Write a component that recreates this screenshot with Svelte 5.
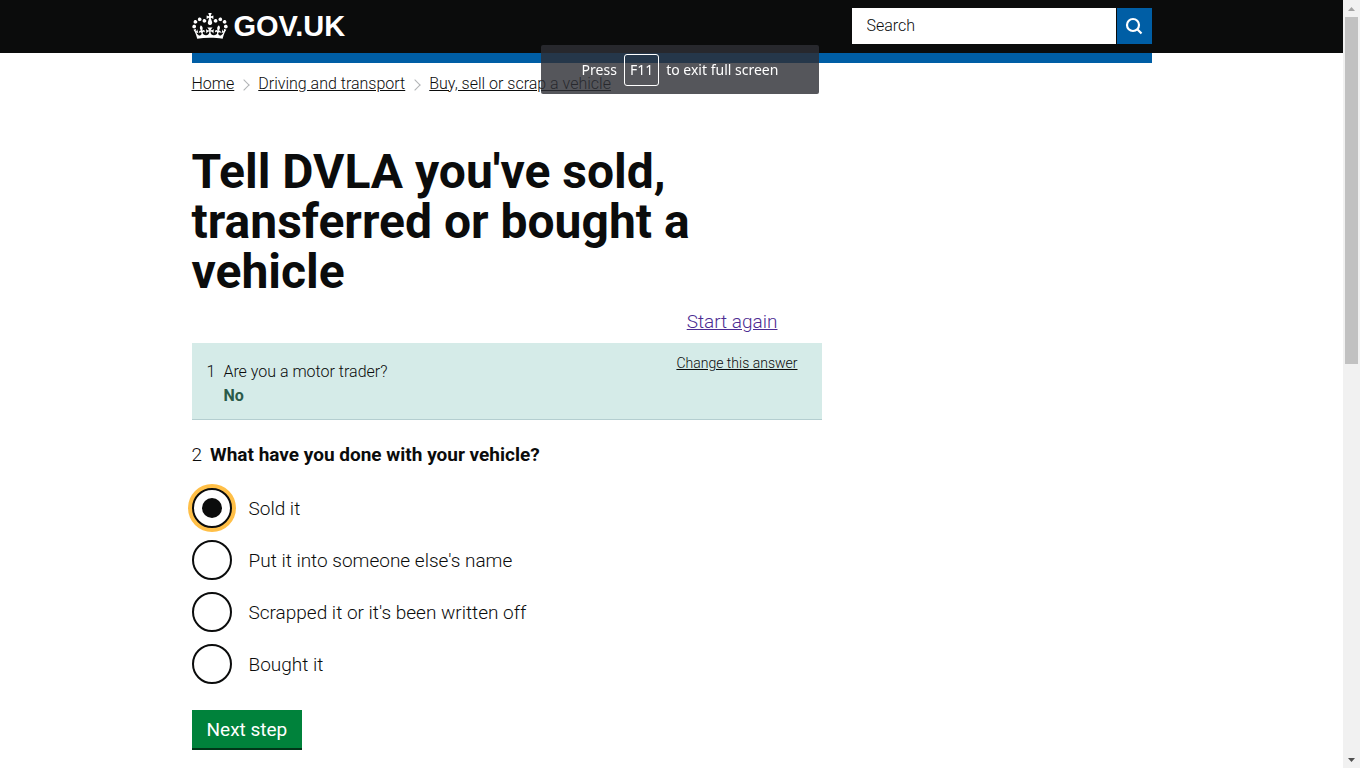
<script>
  const crumbs = ['Home', 'Driving and transport', 'Buy, sell or scrap a vehicle'];

  const options = [
    { value: 'sold',        label: 'Sold it' },
    { value: 'transferred', label: "Put it into someone else's name" },
    { value: 'scrapped',    label: "Scrapped it or it's been written off" },
    { value: 'bought',      label: 'Bought it' },
  ];

  let answer = $state('sold');
  let query = $state('');
</script>

<div class="screen">
  <div class="page">
    <header>
      <div class="container header-row">
        <a href="#home" class="logo">
          <svg viewBox="0 0 132 97" aria-hidden="true">
            <path fill="currentColor" d="M25 30.2c3.5 1.5 7.7-.2 9.1-3.7 1.5-3.6-.2-7.8-3.9-9.2-3.6-1.4-7.6.3-9.1 3.9-1.4 3.5.3 7.5 3.9 9zM9 39.5c3.6 1.5 7.8-.2 9.2-3.7 1.5-3.6-.2-7.8-3.9-9.1-3.6-1.5-7.6.2-9.1 3.8-1.4 3.5.3 7.5 3.8 9zM4.4 57.2c3.5 1.5 7.7-.2 9.1-3.8 1.5-3.6-.2-7.7-3.9-9.1-3.5-1.5-7.6.3-9.1 3.8-1.4 3.5.3 7.6 3.9 9.1zm38.3-21.4c3.5 1.5 7.7-.2 9.1-3.8 1.5-3.6-.2-7.7-3.9-9.1-3.6-1.5-7.6.3-9.1 3.8-1.3 3.6.4 7.7 3.9 9.1zm64.4-5.6c-3.6 1.5-7.8-.2-9.1-3.7-1.5-3.6.2-7.8 3.8-9.2 3.6-1.4 7.7.3 9.2 3.9 1.3 3.5-.4 7.5-3.9 9zm15.9 9.3c-3.6 1.5-7.7-.2-9.1-3.7-1.5-3.6.2-7.8 3.7-9.1 3.6-1.5 7.7.2 9.2 3.8 1.5 3.5-.3 7.5-3.8 9zm4.7 17.7c-3.6 1.5-7.8-.2-9.2-3.8-1.5-3.6.2-7.7 3.9-9.1 3.6-1.5 7.7.3 9.2 3.8 1.3 3.5-.4 7.6-3.9 9.1zM89.3 35.8c-3.6 1.5-7.8-.2-9.2-3.8-1.4-3.6.2-7.7 3.9-9.1 3.6-1.5 7.7.3 9.2 3.8 1.4 3.6-.3 7.7-3.9 9.1zM69.7 17.7l8.9 4.7V9.3l-8.9 2.8c-.2-.3-.5-.6-.9-.9L72.4 0H59.6l3.5 11.2c-.3.3-.6.5-.9.9l-8.8-2.8v13.1l8.8-4.7c.3.3.6.7.9.9l-5 15.4v.1c-.2.8-.4 1.6-.4 2.4 0 4.1 3.1 7.5 7 8.1h.2c.3 0 .7.1 1 .1.4 0 .7 0 1-.1h.2c4-.6 7.1-4.1 7.1-8.1 0-.8-.1-1.7-.4-2.4V34l-5.1-15.4c.4-.2.7-.6 1-.9zM66 92.8c16.9 0 32.8 1.1 47.1 3.2 4-16.9 8.9-26.7 14-33.5l-9.6-3.4c1 4.9 1.1 7.2 0 10.2-1.5-1.4-3-4.3-4.2-8.7L108.6 76c2.8-2 5-3.2 7.5-3.3-4.4 9.4-10 11.9-13.6 11.2-4.3-.8-6.3-4.6-5.6-7.9 1-4.7 5.7-5.9 8-.5 4.3-8.7-3-11.4-7.6-8.8 7.1-7.2 7.9-13.5 2.1-21.1-8 6.1-8.1 12.3-4.5 20.8-4.7-5.4-12.1-2.5-9.5 6.2 3.4-5.2 7.9-2 7.2 3.1-.6 4.3-6.4 7.8-13.5 7.2-10.3-.9-10.9-8-11.2-13.8 2.5-.5 7.1 1.8 11 7.3L80.2 60c-4.1 4.4-8 5.3-12.3 5.4 1.4-4.4 8-11.6 8-11.6H55.5s6.4 7.2 7.9 11.6c-4.2-.1-8-1-12.3-5.4l1.4 16.4c3.9-5.5 8.5-7.7 10.9-7.3-.3 5.8-.9 12.8-11.1 13.8-7.2.6-12.9-2.9-13.5-7.2-.7-5 3.8-8.3 7.1-3.1 2.7-8.7-4.6-11.6-9.4-6.2 3.7-8.5 3.6-14.7-4.6-20.8-5.8 7.6-5 13.9 2.2 21.1-4.7-2.6-11.9.1-7.7 8.8 2.3-5.5 7.1-4.2 8.1.5.7 3.3-1.3 7.1-5.7 7.9-3.5.7-9-1.8-13.5-11.2 2.5.1 4.7 1.3 7.5 3.3l-4.7-15.4c-1.2 4.4-2.7 7.2-4.3 8.7-1.1-3-.9-5.3 0-10.2l-9.5 3.4c5 6.9 9.9 16.7 14 33.5 14.8-2.1 30.8-3.2 47.7-3.2z" />
          </svg>
          <span>GOV.UK</span>
        </a>
        <form class="search" role="search" onsubmit={(e) => e.preventDefault()}>
          <input type="search" placeholder="Search" aria-label="Search" bind:value={query} />
          <button aria-label="Search GOV.UK">
            <svg viewBox="0 0 18 18" aria-hidden="true">
              <circle cx="8" cy="8" r="6" />
              <path d="M12.300 12.300L16.500 16.500" />
            </svg>
          </button>
        </form>
      </div>
    </header>
    <div class="container blue-bar"></div>

    <div class="container">
      <nav aria-label="Breadcrumb">
        <ol class="crumbs">
          {#each crumbs as crumb}
            <li><a href="#crumb">{crumb}</a></li>
          {/each}
        </ol>
      </nav>

      <main>
        <h1>Tell DVLA you've sold, transferred or bought a vehicle</h1>

        <div class="restart"><a href="#start">Start again</a></div>

        <section class="done">
          <div>
            <h2><span class="num">1</span>Are you a motor trader?</h2>
            <p>No</p>
          </div>
          <a href="#change">Change this answer</a>
        </section>

        <form onsubmit={(e) => e.preventDefault()}>
          <fieldset>
            <legend><span class="num">2</span><strong>What have you done with your vehicle?</strong></legend>
            {#each options as { value, label }}
              <label class="option">
                <input type="radio" name="answer" {value} bind:group={answer} />
                <span>{label}</span>
              </label>
            {/each}
          </fieldset>
          <button class="next">Next step</button>
        </form>
      </main>
    </div>
  </div>

  <div class="scrollbar" aria-hidden="true">
    <svg class="up" viewBox="0 0 17 17"><path d="M5 11h7L8.500 7z" /></svg>
    <div class="track"><div class="thumb"></div></div>
    <svg class="down" viewBox="0 0 17 17"><path d="M5 7h7L8.500 11z" /></svg>
  </div>
</div>

<div class="toast" role="status">Press <kbd>F11</kbd> to exit full screen</div>

<style>
  :global(body) { margin: 0; background: #fff; }
  .screen {
    --black: #0b0c0c; --blue: #005ea5;
    display: grid; grid-template-columns: 1fr 17px;
    height: 100vh; overflow: hidden;
    font-family: Roboto, "Noto Sans", sans-serif; font-weight: 300;
    font-size: 19px; line-height: 24px; color: var(--black);
  }
  .page { min-width: 0; overflow: hidden; }
  .container { max-width: 960px; margin: 0 auto; }

  header { background: var(--black); }
  .header-row {
    display: flex; align-items: center; justify-content: space-between;
    height: 52px; padding-bottom: 1px;
  }
  .logo {
    display: flex; align-items: center; gap: 6px;
    color: #fff; text-decoration: none;
    font: bold 29px/36px "Liberation Sans", Arial, sans-serif;
  }
  .logo svg { width: 36px; height: 26px; }
  .search { display: flex; gap: 1px; height: 36px; }
  .search input {
    width: 264px; box-sizing: border-box; padding: 0 15px;
    border: 0; border-radius: 0; background: #fff; outline: 0;
    appearance: none; font: inherit; font-size: 16px; color: var(--black);
  }
  .search input::placeholder { color: var(--black); opacity: 1; }
  .search button {
    display: grid; place-items: center; width: 35px; padding: 0;
    border: 0; background: var(--blue); cursor: pointer;
  }
  .search svg { width: 18px; height: 18px; fill: none; stroke: #fff; stroke-width: 2.2; }
  .blue-bar { height: 10px; background: var(--blue); }

  .crumbs {
    display: flex; list-style: none; margin: 0; padding: 11px 0 0;
    font-size: 16px; line-height: 20px;
  }
  .crumbs li { display: flex; align-items: center; }
  .crumbs li + li::before {
    content: ''; width: 7px; height: 7px; margin: 2px 10px 0 6px;
    border: solid #b1b4b6; border-width: 1px 1px 0 0;
    transform: rotate(45deg);
  }
  .crumbs a { color: inherit; }

  main { max-width: 630px; padding-top: 53px; }
  h1 { max-width: 560px; margin: 0; font-size: 48px; line-height: 50px; font-weight: bold; }
  .restart { padding: 13px 44px 9px 0; text-align: right; }
  .restart a { color: #4c2c92; }

  .done {
    display: flex; justify-content: space-between; align-items: flex-start;
    padding: 10px 24px 11px 15px;
    background: #d5ebe8; border-bottom: 1px solid #b4ced0;
    font-size: 16px;
  }
  .done h2 { margin: 7px 0 0; font: inherit; }
  .done p { margin: 0 0 0 17px; font-weight: bold; color: #2b5a49; }
  .done a { font-size: 14px; line-height: 20px; color: inherit; }
  .num { margin-right: 8px; }
  strong { font-weight: bold; }

  fieldset { display: flex; flex-direction: column; gap: 12px; margin: 0; padding: 0; border: 0; }
  legend { padding: 23px 0 21px; }
  .option { display: flex; align-items: center; gap: 17px; cursor: pointer; }
  .option span { padding-top: 2px; }
  .option input {
    appearance: none; flex: none; display: grid; place-content: center;
    width: 40px; height: 40px; margin: 0;
    border: 2px solid var(--black); border-radius: 50%; background: #fff; outline: 0;
  }
  .option input:checked { box-shadow: 0 0 0 4px #ffbf47; }
  .option input:checked::before {
    content: ''; width: 20px; height: 20px; border-radius: 50%; background: var(--black);
  }
  .next {
    margin-top: 26px; padding: 8px 15px 6px; border: 0;
    background: #00823b; box-shadow: 0 2px 0 #003618;
    font: inherit; font-weight: normal; color: #fff; cursor: pointer;
  }

  .scrollbar { display: flex; flex-direction: column; background: #f1f1f1; }
  .scrollbar svg { width: 17px; height: 17px; }
  .up { fill: #a3a3a3; }
  .down { fill: #505050; }
  .track { flex: 1; padding: 0 2px; }
  .thumb { height: calc(47% + 2px); background: #c1c1c1; }

  /* browser notice that floats over the page */
  .toast {
    position: fixed; top: 45px; left: 50%; transform: translateX(-50%);
    display: flex; align-items: center; justify-content: center; gap: 7px;
    width: 278px; height: 49px; border-radius: 2px;
    background: rgba(45, 47, 53, 0.81); color: #fff;
    font: 14px/20px "Noto Sans", sans-serif; white-space: nowrap;
  }
  kbd {
    padding: 5px; border: 1px solid #fff; border-radius: 3px; font: inherit;
  }
</style>
